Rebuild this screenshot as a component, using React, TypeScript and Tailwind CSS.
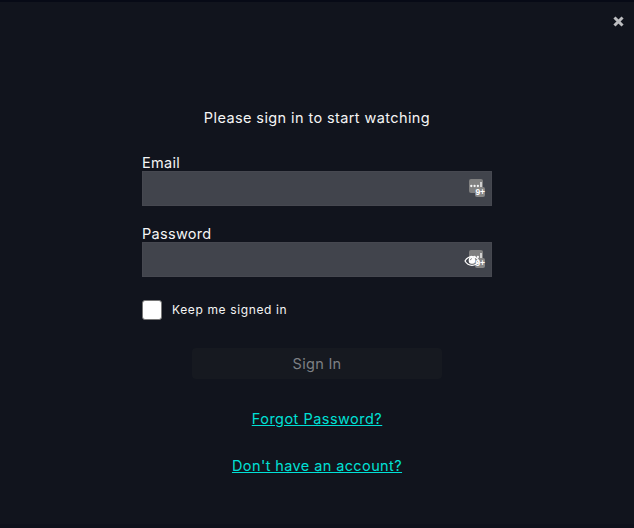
import { useState } from "react";

function BadgeIcon() {
  return (
    <svg width="18" height="20" viewBox="0 0 18 20" aria-hidden="true">
      <rect x="1" y="1" width="14" height="14" rx="2" fill="#808080" />
      <rect x="7" y="9" width="10" height="10" rx="2" fill="#858585" />
      <g fill="#f4f4f4">
        <circle cx="3.3" cy="8" r="1.15" />
        <circle cx="6.6" cy="8" r="1.15" />
        <circle cx="9.9" cy="8" r="1.15" />
        <rect x="12.3" y="4" width="1.4" height="5" />
      </g>
      <text x="7.4" y="16.7" fill="#fff" fontSize="8.5" fontWeight="700" fontFamily="Liberation Sans, sans-serif">
        9+
      </text>
    </svg>
  );
}

function EyeIcon() {
  return (
    <svg width="16" height="12" viewBox="0 0 16 12" fill="none" stroke="#fff" strokeWidth="1.2" aria-hidden="true">
      <path d="M1 6C4.4 .2 11.6 .2 15 6C11.6 11.8 4.4 11.8 1 6Z" />
      <circle cx="8" cy="5.4" r="3.3" fill="#fff" stroke="none" />
      <path d="M6.3 5.2Q6.4 3.7 8 3.6" stroke="#777" strokeWidth=".8" />
    </svg>
  );
}

function Field({ label, type }: { label: string; type: "email" | "password" }) {
  const [value, setValue] = useState("");
  return (
    <label className="block w-[350px]">
      <span className="block h-4 text-[14.5px] leading-4 tracking-[0.3px]">{label}</span>
      <span className="relative block h-[35px]">
        <input
          type={type}
          value={value}
          onChange={(e) => setValue(e.target.value)}
          className="block h-full w-full border border-[#464850] bg-[#41444c] px-3 pr-9 outline-none"
        />
        <span className="absolute top-[7px] right-[6px]">
          <BadgeIcon />
        </span>
        {type === "password" && (
          <span className="absolute top-[13px] right-[12px]">
            <EyeIcon />
          </span>
        )}
      </span>
    </label>
  );
}

export default function App() {
  return (
    <main className="flex h-[528px] w-full flex-col border-t-2 border-b-4 border-t-[#070a16] border-b-[#0e111b] bg-[#11141d] font-['Inter','Liberation_Sans',sans-serif] text-[#f5f5f5]">
      <header className="flex h-[38px] justify-end pt-[14px] pr-[10px]">
        <button aria-label="Close" className="h-[11px] w-[11px]">
          <svg width="11" height="11" viewBox="0 0 11 11" fill="none" stroke="#bcbdc0" strokeWidth="3" strokeLinecap="square">
            <path d="M2.5 2.5L8.5 8.5M8.5 2.5L2.5 8.5" />
          </svg>
        </button>
      </header>
      <form className="flex flex-col items-center pt-[68px]" onSubmit={(e) => e.preventDefault()}>
        <h1 className="h-5 text-[14.5px] leading-5 font-normal tracking-[0.4px] whitespace-nowrap">Please sign in to start watching</h1>
        <div className="mt-[27px] flex flex-col gap-5">
          <Field label="Email" type="email" />
          <Field label="Password" type="password" />
        </div>
        <label className="mt-[23px] flex h-5 w-[350px] items-center gap-[10px] text-[12px] tracking-[0.63px]">
          <input type="checkbox" className="size-5 appearance-none rounded-[3px] border border-[#777] bg-white" />
          <span>Keep me signed in</span>
        </label>
        <button disabled className="mt-7 h-[31px] w-[250px] rounded-[4px] bg-[#161920] text-[14.5px] tracking-[0.3px] text-[#7e8085]">
          Sign In
        </button>
        <a href="#" className="mt-[30px] h-5 text-[14.5px] leading-5 tracking-[0.48px] whitespace-nowrap text-[#00e0d6] underline underline-offset-1">Forgot Password?</a>
        <a href="#" className="mt-[27px] h-5 text-[14.5px] leading-5 tracking-[0.4px] whitespace-nowrap text-[#00e0d6] underline underline-offset-1">Don't have an account?</a>
      </form>
    </main>
  );
}
